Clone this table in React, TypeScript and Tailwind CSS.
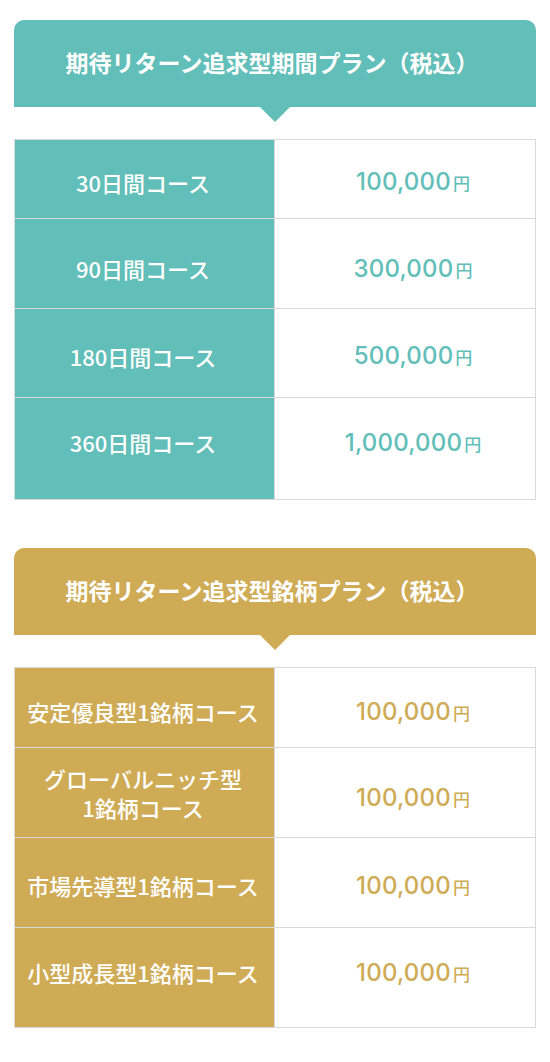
import React from "react";

type Row = { label: React.ReactNode; price: string; h: string; lp?: string; pp?: string };

const jp = "font-['Noto_Sans_CJK_JP','Noto_Sans',sans-serif]";

function Plan({
  title,
  rows,
  color,
  textColor,
  borderTop,
}: {
  title: string;
  rows: Row[];
  color: string;
  textColor: string;
  borderTop: string;
}) {
  return (
    <section>
      <div
        className={`relative flex h-[87px] items-center justify-center rounded-t-[10px] ${color} pb-[2px] pr-[6px] text-[23px] font-bold text-white ${jp}`}
      >
        {title}
        <span
          className={`absolute left-1/2 top-full h-0 w-0 -translate-x-1/2 border-x-[15px] border-t-[15px] border-x-transparent ${borderTop}`}
        />
      </div>
      <div className="mt-[32px] border-x border-b border-[#d9d9d9]">
        {rows.map((r, i) => (
          <div key={i} className={`grid grid-cols-[259px_1fr] border-t border-[#d9d9d9] ${r.h}`}>
            <div
              className={`flex items-center justify-center ${color} ${r.lp ?? ""} pr-[3px] text-center text-[22px] font-medium leading-[29px] text-white ${jp}`}
            >
              {r.label}
            </div>
            <div
              className={`flex items-center justify-center border-l border-[#d9d9d9] ${r.pp ?? r.lp ?? ""} pl-[16px] ${textColor}`}
            >
              <span className="font-['Inter',sans-serif] text-[24px] font-medium tracking-[0.2px]">{r.price}</span>
              <span className={`ml-[2px] mt-[2px] text-[17px] font-medium ${jp}`}>円</span>
            </div>
          </div>
        ))}
      </div>
    </section>
  );
}

export default function App() {
  const teal = "bg-[#61beb8]";
  const gold = "bg-[#cfab56]";
  return (
    <div className="min-h-[1062px] w-[550px] bg-white px-[14px] pt-[20px]">
      <Plan
        title="期待リターン追求型期間プラン（税込）"
        color={teal}
        textColor="text-[#61beb8]"
        borderTop="border-t-[#61beb8]"
        rows={[
          { label: "30日間コース", price: "100,000", h: "h-[79px]", lp: "pt-[6px]" },
          { label: "90日間コース", price: "300,000", h: "h-[90px]", lp: "pt-[10px]" },
          { label: "180日間コース", price: "500,000", h: "h-[89px]", lp: "pt-[6px]" },
          { label: "360日間コース", price: "1,000,000", h: "h-[102px]", lp: "pb-[12px]" },
        ]}
      />
      <div className="mt-[48px]">
        <Plan
          title="期待リターン追求型銘柄プラン（税込）"
          color={gold}
          textColor="text-[#cfab56]"
          borderTop="border-t-[#cfab56]"
          rows={[
            { label: "安定優良型1銘柄コース", price: "100,000", h: "h-[80px]", lp: "pt-[8px]" },
            {
              label: (
                <span>
                  グローバルニッチ型
                  <br />
                  1銘柄コース
                </span>
              ),
              price: "100,000",
              h: "h-[90px]",
              pp: "pt-[10px]",
            },
            { label: "市場先導型1銘柄コース", price: "100,000", h: "h-[90px]", lp: "pt-[6px]" },
            { label: "小型成長型1銘柄コース", price: "100,000", h: "h-[100px]", lp: "pb-[10px]" },
          ]}
        />
      </div>
    </div>
  );
}
